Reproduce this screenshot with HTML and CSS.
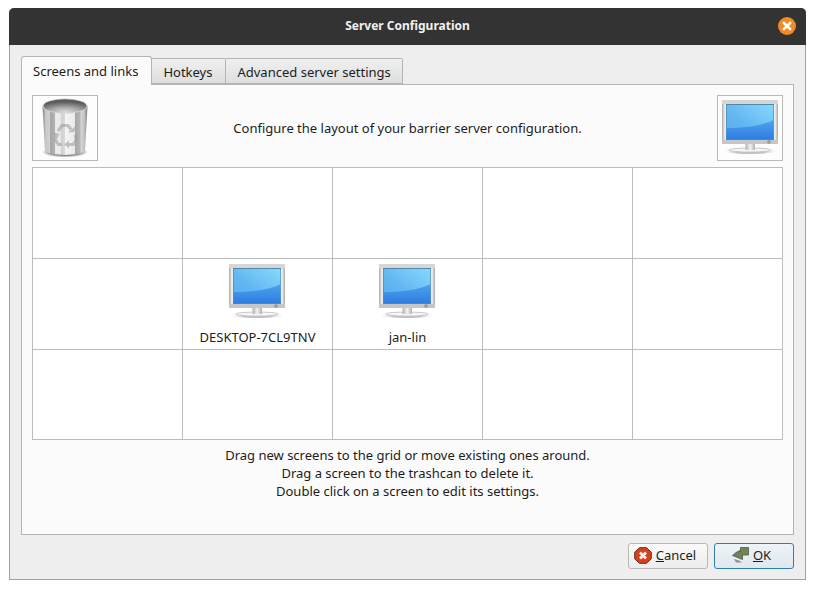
FILE: index.html
```html
<!DOCTYPE html>
<html lang="en">
<head>
<meta charset="utf-8">
<title>Server Configuration</title>
<link rel="stylesheet" href="styles.css">
</head>
<body>
<svg class="defs" width="0" height="0" aria-hidden="true">
  <defs>
    <linearGradient id="scr" x1="1" y1="0" x2="0" y2="1">
      <stop offset="0" stop-color="#86d8fc"/><stop offset=".6" stop-color="#62b6f0"/><stop offset="1" stop-color="#58aaec"/>
    </linearGradient>
    <linearGradient id="low" x1="0" y1="0" x2="0" y2="1">
      <stop offset="0" stop-color="#4fa3ec"/><stop offset="1" stop-color="#2c7de2"/>
    </linearGradient>
    <linearGradient id="shell" x1="0" y1="0" x2="1" y2="0">
      <stop offset="0" stop-color="#a8a8a8"/><stop offset=".05" stop-color="#ececec"/><stop offset=".95" stop-color="#ececec"/><stop offset="1" stop-color="#a8a8a8"/>
    </linearGradient>
    <linearGradient id="neck" x1="0" y1="0" x2="1" y2="0">
      <stop offset="0" stop-color="#b0b0b0"/><stop offset=".5" stop-color="#f2f2f2"/><stop offset="1" stop-color="#b0b0b0"/>
    </linearGradient>
    <linearGradient id="foot" x1="0" y1="0" x2="1" y2="0">
      <stop offset="0" stop-color="#fff" stop-opacity="0"/><stop offset=".25" stop-color="#c4c4c4"/><stop offset=".75" stop-color="#c4c4c4"/><stop offset="1" stop-color="#fff" stop-opacity="0"/>
    </linearGradient>
    <linearGradient id="can" x1="0" y1="0" x2="1" y2="0">
      <stop offset="0" stop-color="#7e7e7e"/><stop offset=".07" stop-color="#c8c8c8"/><stop offset=".16" stop-color="#d0d0d0"/><stop offset=".17" stop-color="#a6a6a6"/><stop offset=".28" stop-color="#b4b4b4"/><stop offset=".29" stop-color="#eeeeee"/><stop offset=".4" stop-color="#e8e8e8"/><stop offset=".41" stop-color="#cfcfcf"/><stop offset=".49" stop-color="#d8d8d8"/><stop offset=".5" stop-color="#f4f4f4"/><stop offset=".72" stop-color="#eaeaea"/><stop offset=".73" stop-color="#a8a8a8"/><stop offset=".84" stop-color="#b6b6b6"/><stop offset=".85" stop-color="#d8d8d8"/><stop offset=".94" stop-color="#bdbdbd"/><stop offset="1" stop-color="#707070"/>
    </linearGradient>
    <radialGradient id="rim" cx=".5" cy=".95" r=".75">
      <stop offset="0" stop-color="#dcdcdc"/><stop offset=".5" stop-color="#a4a4a4"/><stop offset="1" stop-color="#5c5c5c"/>
    </radialGradient>
    <radialGradient id="shadow">
      <stop offset=".6" stop-color="#444" stop-opacity=".7"/><stop offset="1" stop-color="#444" stop-opacity="0"/>
    </radialGradient>
    <symbol id="monitor" viewBox="0 0 56 54">
      <ellipse cx="28" cy="51" rx="28" ry="3" fill="url(#foot)"/>
      <ellipse cx="28" cy="50" rx="21" ry="2" fill="#f6f6f6" stroke="#b5b5b5" stroke-width=".6"/>
      <rect x="23.500" y="43" width="9.500" height="7" fill="url(#neck)"/>
      <rect x="0" y="0" width="56" height="44" fill="url(#shell)"/>
      <rect x="0" y="0" width="56" height="4" fill="#d6d6d6"/>
      <rect x="0" y="40" width="56" height="4" fill="#c6c6c6"/>
      <rect x="4" y="4" width="48" height="36" fill="#47769c"/>
      <rect x="4.500" y="4.800" width="47" height="34.700" fill="url(#scr)"/>
      <path d="M4.500 28C22 28 40 26 51.500 20V39.500H4.500Z" fill="url(#low)"/>
      <circle cx="47" cy="42" r="1.400" fill="#aaa" stroke="#777" stroke-width=".5"/>
    </symbol>
  </defs>
</svg>
<main class="window">
  <header class="titlebar">
    <h1 class="title">Server Configuration</h1>
    <span class="close" aria-label="Close">
      <svg width="18" height="18" viewBox="0 0 18 18"><circle cx="9" cy="9" r="9" fill="#f28a26"/><path d="M5.800 5.800l6.400 6.400M12.200 5.800l-6.400 6.400" stroke="#fff" stroke-width="2.600" stroke-linecap="round"/></svg>
    </span>
  </header>
  <div class="content">
    <nav class="tabs">
      <span class="tab active">Screens and links</span>
      <span class="tab hotkeys">Hotkeys</span>
      <span class="tab">Advanced server settings</span>
    </nav>
    <section class="panel">
      <div class="top-row">
        <div class="icon-box">
          <svg class="trash" width="46" height="60" viewBox="0 0 46 60">
            <ellipse cx="23" cy="54" rx="23" ry="5.500" fill="url(#shadow)"/>
            <path d="M0.500 8L3 52C5 58.500 41 58.500 43 52L45.500 8Z" fill="url(#can)"/>
            <ellipse cx="23" cy="8" rx="22.500" ry="7.500" fill="#d4d4d4"/>
            <ellipse cx="23" cy="8" rx="21.500" ry="6.800" fill="url(#rim)"/>
            <g class="recycle">
              <g fill="none" stroke="#a0a0a0" stroke-width="3.200">
                <path d="M16 33l4-5.500h6l3 4"/>
                <path d="M33 37l1.500 4-3 5.500h-5"/>
                <path d="M20 46.500h-3.500l-3.500-5 2-4"/>
              </g>
              <g fill="#a0a0a0">
                <path d="M26 34.500l6.500-.5 1-6z"/>
                <path d="M27 42.500v8l-5-4z"/>
                <path d="M11 34.500l7 1.500-4.500 4.500z"/>
              </g>
            </g>
          </svg>
        </div>
        <p class="headline">Configure the layout of your barrier server configuration.</p>
        <div class="icon-box"><svg class="monitor raised"><use href="#monitor"/></svg></div>
      </div>
      <div class="grid">
        <div class="cell"></div><div class="cell"></div><div class="cell"></div><div class="cell"></div><div class="cell"></div>
        <div class="cell"></div>
        <div class="cell"><svg class="monitor shifted"><use href="#monitor"/></svg><span class="name">DESKTOP-7CL9TNV</span></div>
        <div class="cell"><svg class="monitor shifted"><use href="#monitor"/></svg><span class="name">jan-lin</span></div>
        <div class="cell"></div><div class="cell"></div>
        <div class="cell"></div><div class="cell"></div><div class="cell"></div><div class="cell"></div><div class="cell"></div>
      </div>
      <div class="help">
        <p>Drag new screens to the grid or move existing ones around.</p>
        <p>Drag a screen to the trashcan to delete it.</p>
        <p>Double click on a screen to edit its settings.</p>
      </div>
    </section>
    <footer class="actions">
      <button class="btn cancel" type="button">
        <svg width="18" height="17" viewBox="0 0 18 17"><path d="M5.500 .7h7l4.800 4.500v6.600l-4.800 4.500h-7L.7 11.800V5.200z" fill="#d5401e" stroke="#6f2a1c" stroke-width="1" stroke-linejoin="round"/><path d="M6 5.500l6 6M12 5.500l-6 6" stroke="#fbeee8" stroke-width="2.800"/></svg>
        <span class="label"><u>C</u>ancel</span>
      </button>
      <button class="btn ok" type="button">
        <svg width="17" height="16" viewBox="0 0 17 16"><path d="M8.500 .5h8v7.500H10.500v4.500L.5 8.500 4 5.500 8 3.500V5.500L8.500 5z" fill="#74825a" stroke="#4e5a3c" stroke-width=".8" stroke-linejoin="round"/><path d="M2 12l5 1.500 3 2H4z" fill="#444" opacity=".55"/></svg>
        <span class="label"><u>O</u>K</span>
      </button>
    </footer>
  </div>
</main>
</body>
</html>
```
FILE: styles.css
```css
* { box-sizing: border-box; }
html, body { margin: 0; padding: 0; }
body {
  width: 815px;
  height: 589px;
  background: #fff;
  font-family: "Noto Sans", sans-serif;
  font-size: 13px;
  color: #1c1c1c;
  overflow: hidden;
  padding: 8px 0 0 9px;
}
.defs { position: absolute; }
p { margin: 0; }
.window {
  width: 797px;
  height: 572px;
  display: flex;
  flex-direction: column;
  background: #eeeeee;
  border: 1px solid #a0a0a0;
  border-top: 0;
  border-radius: 5px 5px 0 0;
}
.titlebar {
  height: 37px;
  margin: 0 -1px;
  padding-bottom: 2px;
  flex: none;
  display: flex;
  align-items: center;
  justify-content: center;
  position: relative;
  background: #333333;
  border-radius: 5px 5px 0 0;
}
.title {
  margin: 0;
  font-size: 12px;
  font-weight: 700;
  color: #f0f0f0;
}
.close {
  position: absolute;
  right: 10px;
  top: 9px;
  width: 18px;
  height: 18px;
  display: block;
}
.close svg { display: block; }
.content {
  flex: 1;
  display: flex;
  flex-direction: column;
  padding: 11px;
}
.tabs {
  display: flex;
  align-items: flex-end;
  height: 28px;
  flex: none;
  position: relative;
  z-index: 1;
}
.tab {
  height: 26px;
  padding: 2px 12px 0 11px;
  display: flex;
  align-items: center;
  background: linear-gradient(#f0f0f0, #dedede);
  border: 1px solid #b4b4b4;
  border-left: 0;
  border-radius: 0 2px 0 0;
  white-space: nowrap;
}
.tab.hotkeys { padding-right: 13px; }
.tab:last-child { padding-right: 11px; }
.tab.active {
  height: 29px;
  margin-bottom: -1px;
  padding: 0 13px 0 11px;
  background: #fbfbfb;
  border-left: 1px solid #b4b4b4;
  border-bottom: 0;
  border-radius: 3px 3px 0 0;
}
.panel {
  height: 451px;
  flex: none;
  display: flex;
  flex-direction: column;
  background: #fbfbfb;
  border: 1px solid #b4b4b4;
  padding: 10px;
}
.top-row {
  height: 66px;
  display: flex;
  align-items: center;
  justify-content: space-between;
  flex: none;
}
.icon-box {
  width: 66px;
  height: 66px;
  border: 1px solid #b9b9b9;
  display: flex;
  align-items: center;
  justify-content: center;
  background: #fdfdfd;
}
.headline { text-align: center; flex: 1; }
.monitor { width: 56px; height: 54px; display: block; flex: none; }
.monitor.raised { margin-bottom: 2px; }
.monitor.shifted { margin-right: 1px; }
.trash { display: block; }
.recycle { opacity: .6; }
.grid {
  margin-top: 6px;
  width: 751px;
  height: 273px;
  display: grid;
  grid-template-columns: repeat(5, 150px);
  grid-template-rows: 91px 91px 90px;
  background: #fff;
  border-top: 1px solid #bcbcbc;
  border-left: 1px solid #bcbcbc;
  flex: none;
}
.cell {
  border-right: 1px solid #bcbcbc;
  border-bottom: 1px solid #bcbcbc;
  display: flex;
  flex-direction: column;
  align-items: center;
  padding-top: 5px;
}
.name { margin-top: 10px; line-height: 18px; white-space: nowrap; }
.help {
  margin-top: 5.500px;
  text-align: center;
  line-height: 18px;
}
.actions {
  display: flex;
  justify-content: flex-end;
  gap: 6px;
  margin-top: 8px;
  flex: none;
}
.btn {
  width: 80px;
  height: 26px;
  display: flex;
  align-items: center;
  justify-content: center;
  gap: 4px;
  padding: 0;
  font: inherit;
  color: inherit;
  background: linear-gradient(#fbfbfb, #ececec);
  border: 1px solid #b8b8b8;
  border-radius: 3px;
}
.btn.cancel { padding-right: 6px; }
.btn.ok {
  padding-right: 5px;
  background: linear-gradient(#eef3f7, #dfe8ef);
  border-color: #2f7fa6;
}
.btn svg { display: block; flex: none; margin-bottom: 2px; }
.label { padding-bottom: 2px; }
```
